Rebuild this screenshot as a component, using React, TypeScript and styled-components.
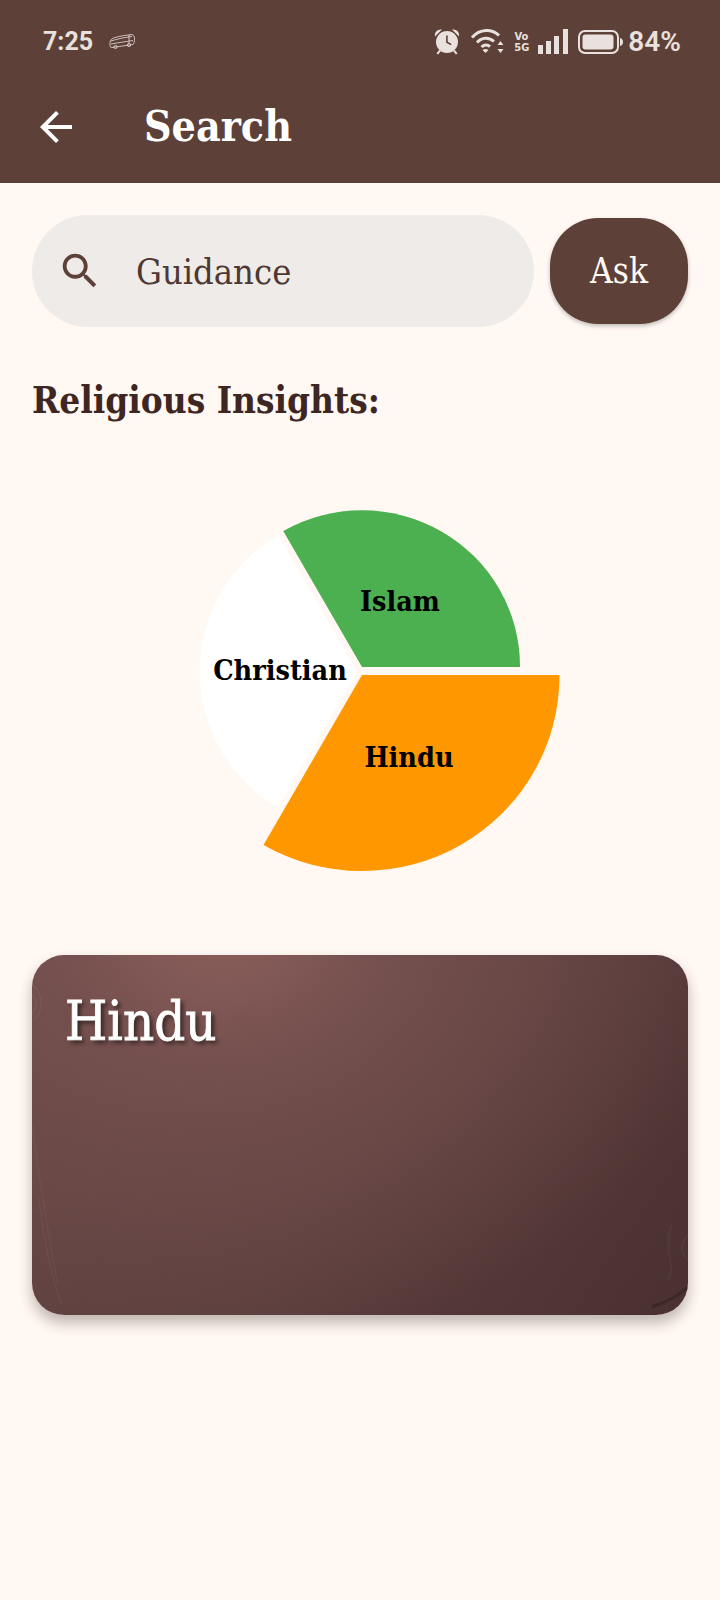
import React from 'react';
import styled, { createGlobalStyle } from 'styled-components';

const SERIF = '"DejaVu Serif Condensed", "DejaVu Serif", "Liberation Serif", serif';

const GlobalStyle = createGlobalStyle`
  html, body {
    margin: 0;
    padding: 0;
    background: #fff8f3;
  }
`;

const Page = styled.div`
  width: 720px;
  height: 1600px;
  overflow: hidden;
  background: #fff8f3;
  font-family: ${SERIF};
`;

// Header
const Header = styled.header`
  height: 183px;
  background: #5d4037;
  display: flex;
  flex-direction: column;
`;

const StatusBar = styled.div`
  height: 83px;
  padding: 0 39px 0 43px;
  display: flex;
  align-items: center;
  justify-content: space-between;
  color: #e9e1de;
  font-family: Roboto, "Liberation Sans", sans-serif;
  font-weight: 700;
`;

const StatusLeft = styled.div`
  display: flex;
  align-items: center;
  gap: 16px;
  font-size: 25px;
`;

const StatusRight = styled.div`
  display: flex;
  align-items: center;
  gap: 10px;
`;

const Network = styled.div`
  width: 14px;
  font-family: "DejaVu Sans Condensed", "Liberation Sans", sans-serif;
  font-size: 11px;
  font-weight: 700;
  line-height: 11px;
  text-align: center;
`;

const Percent = styled.span`
  margin-left: -5px;
  font-size: 28px;
  font-weight: 600;
`;

const AppBar = styled.div`
  height: 88px;
  padding-left: 32px;
  display: flex;
  align-items: center;
  gap: 64px;
`;

const Title = styled.h1`
  margin: 0 0 2px;
  color: #fff;
  font-size: 42.5px;
  font-weight: 700;
  line-height: 1;
`;

// Search row
const SearchRow = styled.div`
  margin-top: 32px;
  padding: 0 32px;
  display: flex;
  align-items: center;
  gap: 16px;
`;

const SearchField = styled.div`
  flex: 1;
  height: 112px;
  padding-left: 25px;
  box-sizing: border-box;
  border-radius: 56px;
  background: #efebe8;
  display: flex;
  align-items: center;
  gap: 33px;
  color: #4e3833;
  font-size: 36px;
`;

const AskButton = styled.button`
  width: 138px;
  height: 106px;
  padding: 0;
  border: 0;
  border-radius: 48px;
  background: #5d4037;
  color: #fff8f3;
  font-family: inherit;
  font-size: 35px;
  box-shadow: 0 2px 4px rgba(0, 0, 0, 0.25);
`;

const Heading = styled.h2`
  margin: 49px 32px 0;
  color: #3e2723;
  font-size: 36.6px;
  font-weight: 700;
  line-height: 50px;
`;

// Chart
const ChartWrap = styled.div`
  margin-top: 64px;
  display: flex;
  justify-content: center;
`;

const ChartLabel = styled.text`
  fill: #000;
  font-family: ${SERIF};
  font-size: 28.5px;
  font-weight: 700;
  text-anchor: middle;
  dominant-baseline: central;
`;

// Card
const CardShadow = styled.div`
  margin: 65px 32px 0;
  border-radius: 32px;
  box-shadow: 0 8px 14px rgba(62, 39, 35, 0.32);
`;

const Card = styled.div`
  position: relative;
  height: 360px;
  border-radius: 32px;
  overflow: hidden;
  background:
    radial-gradient(ellipse 520px 420px at 190px -30px, rgba(140, 96, 92, 1) 0%, rgba(120, 82, 80, 0.8) 35%, rgba(93, 60, 60, 0) 100%),
    linear-gradient(125deg, #654644 0%, #5c3f3e 50%, #4a3030 100%);
`;

const CardTitle = styled.div`
  position: relative;
  padding: 32px 0 0 33px;
  color: #fff;
  font-size: 54px;
  line-height: 70px;
  -webkit-text-stroke: 0.8px #fff;
  text-shadow: 3px 3px 4px rgba(0, 0, 0, 0.6);
`;

const CardTexture = styled.svg`
  position: absolute;
  inset: 0;
`;

const BackIcon = () => (
  <svg width="48" height="48" viewBox="0 0 24 24" fill="#fff">
    <path d="M20 11H7.83l5.59-5.59L12 4l-8 8 8 8 1.41-1.41L7.83 13H20v-2z" />
  </svg>
);

const SearchIcon = () => (
  <svg width="46" height="46" viewBox="0 0 24 24" fill="#5d4037">
    <path d="M15.5 14h-.79l-.28-.27C15.41 12.59 16 11.11 16 9.5 16 5.91 13.09 3 9.5 3S3 5.91 3 9.5 5.91 16 9.5 16c1.61 0 3.09-.59 4.23-1.57l.27.28v.79l5 4.99L20.49 19l-4.99-5zm-6 0C7.01 14 5 11.99 5 9.5S7.01 5 9.5 5 14 7.01 14 9.5 11.99 14 9.5 14z" />
  </svg>
);

const BusIcon = () => (
  <svg width="26" height="17" viewBox="0 0 26 17" fill="none" stroke="#e9e1de" strokeWidth="0.8">
    <path d="M1 9.5C1 7 3 5.5 6 4.5 11 3 18 2 23 1.5c1.5 0 2.5 2 2.5 4.5 0 2-.5 4.5-1.5 5.5l-21 3c-1.5 0-2-1-2-2z" />
    <path d="M2 8c6-2 13-3.500 21-4.500M2 11c7-1.200 14-2.300 22-3.500M20 2v8" />
    <circle cx="6.500" cy="14" r="1.600" />
    <circle cx="20" cy="12" r="1.600" />
  </svg>
);

const AlarmIcon = () => (
  <svg width="26" height="27" viewBox="0 0 26 27" fill="#e9e1de">
    <path fillRule="evenodd" d="M13 4a11 11 0 1 1 0 22 11 11 0 0 1 0-22zm-.9 4.500v7.200l4.700 2.600.8-1.300-3.900-2.200V8.500z" transform="translate(0 -1)" />
    <path d="M1 8.500C.300 4 3.500.800 8 1.500zM25 8.500C25.700 4 22.500.800 18 1.500z" />
    <path d="M5 22l-2.500 3.500 1.600 1L7 23zM21 22l2.500 3.500-1.600 1L19 23z" />
  </svg>
);

const WifiIcon = () => (
  <svg width="34" height="25" viewBox="0 0 34 25" fill="none" stroke="#e9e1de" strokeWidth="3">
    <path d="M2 8.500C10-.500 22-.500 29 6.500" />
    <path d="M7 13.500c5-5.500 12-5.500 17-1" />
    <path d="M11.500 18c2.500-2.500 6-2.500 8.500-.3" />
    <path d="M15.500 24l-3-3c1.800-1.400 4.200-1.400 6 0z" fill="#e9e1de" stroke="none" />
    <path d="M30.500 12l3 4h-6zM30.500 24l-3-4h6z" fill="#e9e1de" stroke="none" />
  </svg>
);

const SignalIcon = () => (
  <svg width="30" height="25" viewBox="0 0 30 25" fill="#e9e1de">
    <rect x="0" y="16" width="5" height="9" />
    <rect x="8" y="12" width="5" height="13" />
    <rect x="16" y="7" width="5" height="18" />
    <rect x="25" y="0" width="5" height="25" />
  </svg>
);

const BatteryIcon = () => (
  <svg width="45" height="24" viewBox="0 0 45 24" fill="none">
    <rect x="1" y="1" width="39" height="22" rx="6" stroke="#e9e1de" strokeWidth="2" />
    <rect x="4.500" y="4.500" width="31" height="15" rx="3" fill="#e9e1de" />
    <path d="M42 8c2 .5 3 2 3 4s-1 3.500-3 4z" fill="#e9e1de" />
  </svg>
);

// Slice paths are in page coordinates, the viewBox below lines them up
const Pie = () => (
  <svg width="420" height="400" viewBox="150 490 420 400">
    <path d="M362 667L283.250 531A158 156 0 0 1 520 667Z" fill="#4caf50" />
    <path d="M362 675L559.500 675A197.500 195.500 0 0 1 263.500 845Z" fill="#ff9800" />
    <path d="M357 671.500L278.250 535.100A157.500 157.500 0 0 0 278.250 807.900Z" fill="#ffffff" />
    <ChartLabel x="400" y="601">Islam</ChartLabel>
    <ChartLabel x="280" y="670">Christian</ChartLabel>
    <ChartLabel x="409" y="757">Hindu</ChartLabel>
  </svg>
);

export default function App() {
  return (
    <Page>
      <GlobalStyle />
      <Header>
        <StatusBar>
          <StatusLeft>
            7:25
            <BusIcon />
          </StatusLeft>
          <StatusRight>
            <AlarmIcon />
            <WifiIcon />
            <Network>
              Vo
              <br />
              5G
            </Network>
            <SignalIcon />
            <BatteryIcon />
            <Percent>84%</Percent>
          </StatusRight>
        </StatusBar>
        <AppBar>
          <BackIcon />
          <Title>Search</Title>
        </AppBar>
      </Header>

      <SearchRow>
        <SearchField>
          <SearchIcon />
          Guidance
        </SearchField>
        <AskButton>Ask</AskButton>
      </SearchRow>

      <Heading>Religious Insights:</Heading>

      <ChartWrap>
        <Pie />
      </ChartWrap>

      <CardShadow>
        <Card>
          <CardTexture width="656" height="360" viewBox="0 0 656 360" fill="none">
            <path d="M0 170C6 210 12 260 26 330M6 240C12 280 18 320 30 350" stroke="rgba(255,255,255,0.04)" strokeWidth="1.500" />
            <path d="M620 352C632 348 645 342 656 332" stroke="rgba(30,15,15,0.3)" strokeWidth="3" />
            <path d="M640 270C630 290 645 310 636 325M656 280C646 290 650 300 656 305" stroke="rgba(255,255,255,0.04)" strokeWidth="2" />
            <path d="M0 30C12 36 12 60 0 66M0 40C6 44 6 54 0 58" stroke="rgba(255,255,255,0.05)" strokeWidth="1.500" />
          </CardTexture>
          <CardTitle>Hindu</CardTitle>
        </Card>
      </CardShadow>
    </Page>
  );
}
